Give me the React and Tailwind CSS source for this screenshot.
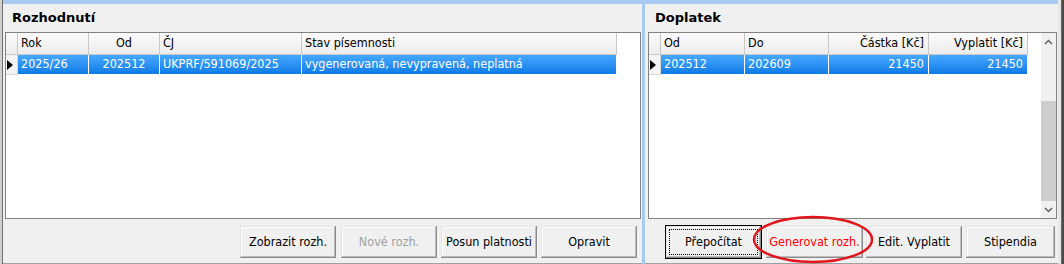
import React from 'react'

const leftCols = [
  { label: 'Rok', value: '2025/26', cls: 'w-[71px] justify-start pl-[3px]' },
  { label: 'Od', value: '202512', cls: 'w-[71px] justify-center' },
  { label: 'ČJ', value: 'UKPRF/591069/2025', cls: 'w-[142px] justify-start pl-[3px]' },
  { label: 'Stav písemnosti', value: 'vygenerovaná, nevypravená, neplatná', cls: 'w-[315px] justify-start pl-[3px]' },
]

const rightCols = [
  { label: 'Od', value: '202512', cls: 'w-[84px] justify-start pl-[3px]' },
  { label: 'Do', value: '202609', cls: 'w-[84px] justify-start pl-[3px]' },
  { label: 'Částka [Kč]', value: '21450', cls: 'w-[100px] justify-end pr-[4px]' },
  { label: 'Vyplatit [Kč]', value: '21450', cls: 'w-[99px] justify-end pr-[4px]' },
]

function Table({ cols }) {
  return (
    <div className="flex flex-col">
      <div className="flex h-[22px]">
        <div className="w-[12px] shrink-0 border-r border-b border-[#c8c8c8] bg-linear-to-b from-[#fbfbfb] to-[#ededed]" />
        {cols.map((c) => (
          <div key={c.label} className={`${c.cls} shrink-0 flex items-center border-r border-b border-[#c8c8c8] bg-linear-to-b from-[#fbfbfb] to-[#ededed] text-black whitespace-nowrap`}>
            {c.label}
          </div>
        ))}
      </div>
      <div className="flex h-[20px]">
        <div className="w-[12px] shrink-0 flex items-center pl-[1px] border-r border-b border-[#d8d8d8] bg-[#f4f4f4]">
          <svg width="6" height="10" viewBox="0 0 6 10"><path d="M0 0 L6 5 L0 10 Z" fill="#000" /></svg>
        </div>
        {cols.map((c) => (
          <div key={c.label} className={`${c.cls} shrink-0 flex items-center border-r border-b border-white bg-linear-to-b from-[#45a8ff] to-[#0b7be6] text-white whitespace-nowrap`}>
            {c.value}
          </div>
        ))}
      </div>
    </div>
  )
}

function Btn({ children, className = '', disabled, focused, red }) {
  return (
    <button
      className={`relative h-[32px] shrink-0 flex items-center justify-center bg-[#f0f0f0] shadow-[inset_-1px_-1px_0_#8a8a8a,inset_1px_1px_0_#e3e3e3,inset_-2px_-2px_0_#bcbcbc,inset_2px_2px_0_#ffffff] whitespace-nowrap ${focused ? 'outline outline-1 outline-black' : ''} ${disabled ? 'text-[#a0a0a0]' : red ? 'text-[#ff0000]' : 'text-black'} ${className}`}
    >
      {focused && <span className="absolute inset-[3px] border border-dotted border-black" />}
      {children}
    </button>
  )
}

function Chevron({ up }) {
  return (
    <svg width="9" height="6" viewBox="0 0 9 6">
      <path d={up ? 'M1 5 L4.5 1.5 L8 5' : 'M1 1 L4.5 4.5 L8 1'} stroke="#606060" strokeWidth="1.5" fill="none" />
    </svg>
  )
}

export default function App() {
  return (
    <div className="relative w-[1064px] h-[264px] overflow-hidden flex bg-[#f0f0f0] font-['DejaVu_Sans_Condensed','DejaVu_Sans',sans-serif] text-[12.5px] text-black">
      <div className="w-[3px] h-full bg-[#cfcfcf] border-r border-[#6f6f6f]" />

      <div className="w-[1055px] h-full flex flex-col bg-[#a9caf0] pt-[4px]">
        <div className="flex flex-1 gap-[3px]">
          {/* Rozhodnutí */}
          <div className="w-[639px] flex flex-col bg-[#f0f0f0] border-b border-[#a0a0a0]">
            <div className="h-[28px] flex items-center pl-[9px] font-bold text-[13px] font-['DejaVu_Sans',sans-serif]">Rozhodnutí</div>
            <div className="ml-[2px] mr-[1px] h-[187px] bg-white border border-[#828282]">
              <Table cols={leftCols} />
            </div>
            <div className="flex-1 flex justify-end items-start pt-[7px] pr-[5px]">
              <Btn className="w-[96px]">Zobrazit rozh.</Btn>
              <Btn className="w-[96px] ml-[5px]" disabled>Nové rozh.</Btn>
              <Btn className="w-[96px] ml-[4px]">Posun platnosti</Btn>
              <Btn className="w-[96px] ml-[4px]">Opravit</Btn>
            </div>
          </div>

          {/* Doplatek */}
          <div className="w-[413px] flex flex-col bg-[#f0f0f0] border-b border-[#a0a0a0]">
            <div className="h-[28px] flex items-center pl-[10px] font-bold text-[13px] font-['DejaVu_Sans',sans-serif]">Doplatek</div>
            <div className="ml-[3px] mr-[1px] h-[187px] bg-white border border-[#828282] flex">
              <div className="flex-1">
                <Table cols={rightCols} />
              </div>
              <div className="w-[15px] flex flex-col bg-[#f0f0f0]">
                <div className="h-[17px] flex items-center justify-center"><Chevron up /></div>
                <div className="h-[51px]" />
                <div className="h-[100px] bg-[#cdcdcd]" />
                <div className="flex-1 flex items-center justify-center"><Chevron /></div>
              </div>
            </div>
            <div className="flex-1 flex items-start pt-[7px] pl-[21px]">
              <Btn className="w-[95px]" focused>Přepočítat</Btn>
              <Btn className="w-[97px] ml-[5px]" red>Generovat rozh.</Btn>
              <Btn className="w-[96px] ml-[3px]">Edit. Vyplatit</Btn>
              <Btn className="w-[89px] ml-[4px]">Stipendia</Btn>
            </div>
          </div>
        </div>
      </div>

      <div className="w-[6px] h-full flex">
        <div className="w-[3px] bg-[#e6e6e6]" />
        <div className="w-[1px] bg-[#6a6a6a]" />
        <div className="w-[2px] bg-[#4a4a4a]" />
      </div>

      <svg className="absolute left-[750px] top-[214px] pointer-events-none" width="126" height="50" viewBox="0 0 126 50">
        <ellipse cx="63" cy="25.5" rx="59" ry="22.5" fill="none" stroke="#e3141c" strokeWidth="2.5" />
      </svg>
    </div>
  )
}
